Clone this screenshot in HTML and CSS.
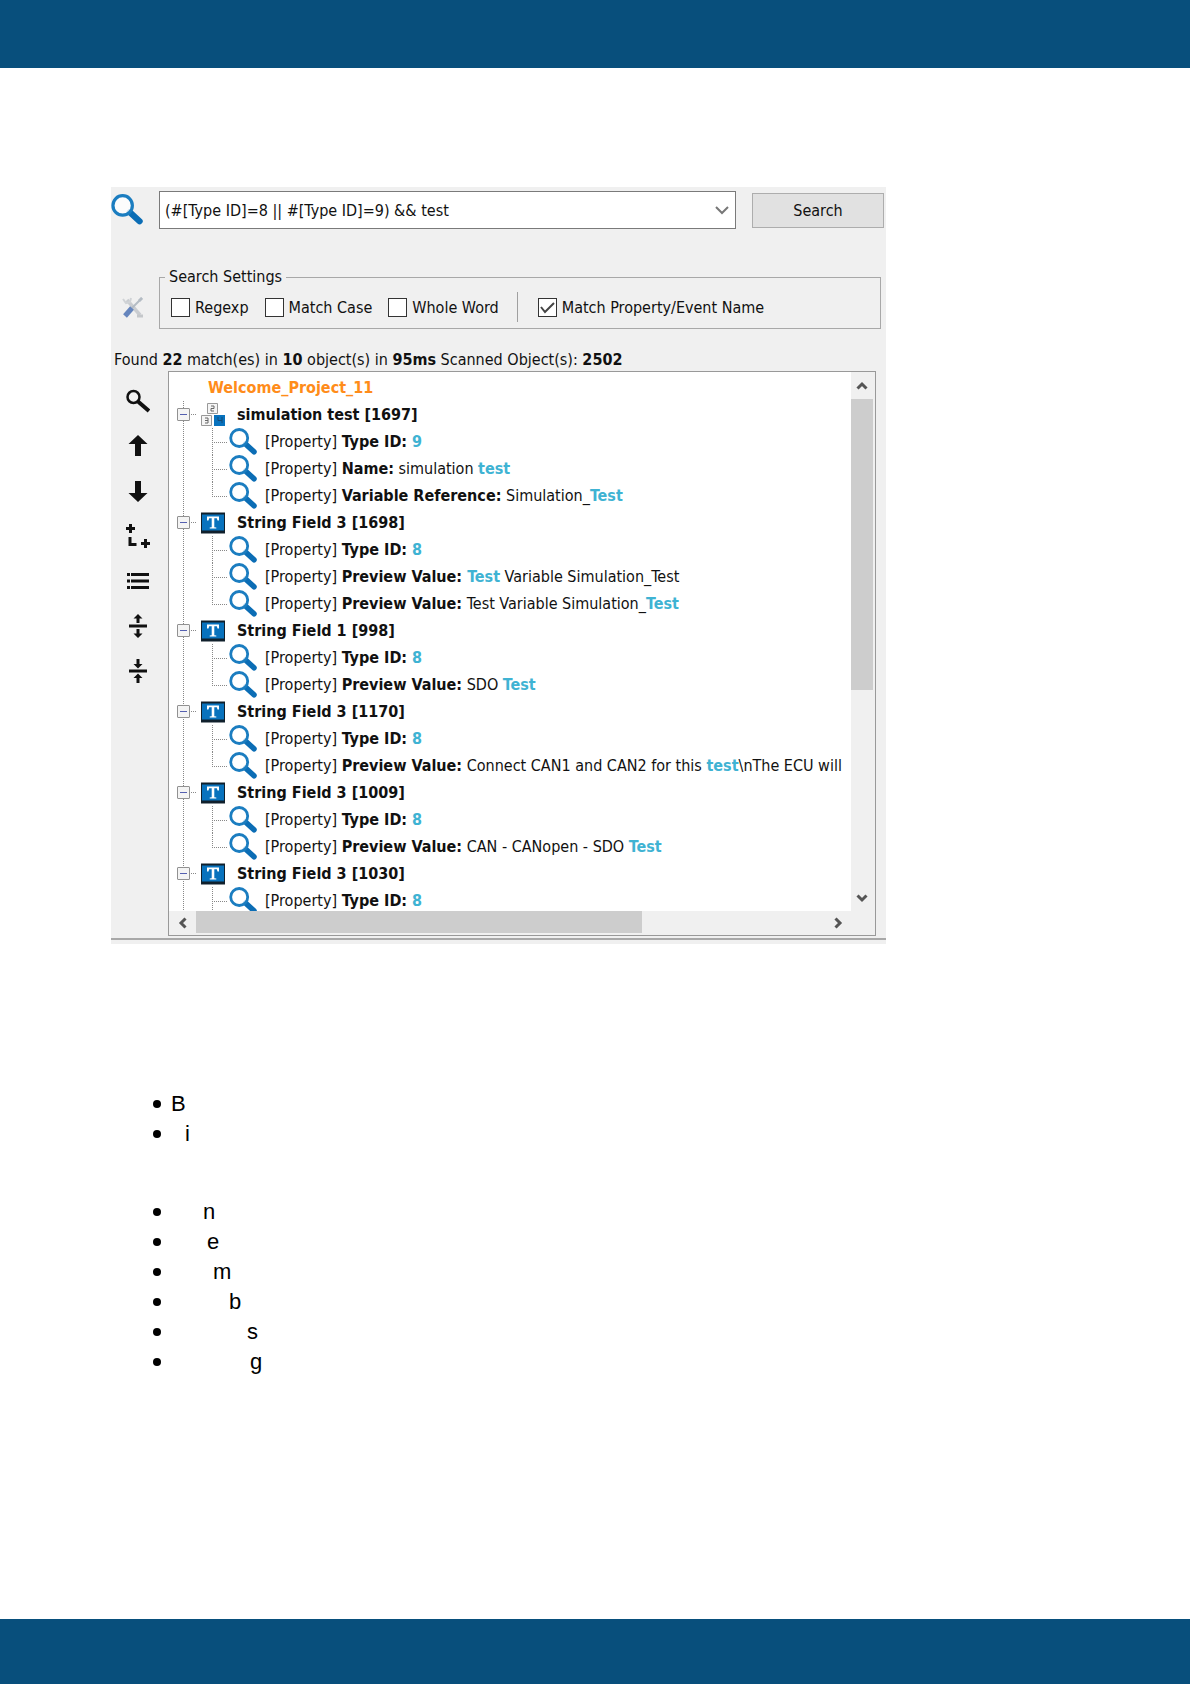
FILE: index.html
```
<!DOCTYPE html>
<html lang="en">
<head>
<meta charset="UTF-8">
<meta name="viewport" content="width=device-width, initial-scale=1.0">
<title>Search</title>
<link rel="stylesheet" href="styles.css">
</head>
<body>

<!-- shared icons -->
<svg class="sprite" aria-hidden="true">
  <symbol id="lens" viewBox="0 0 28 28">
    <path d="M16.500 16L25 23.800" stroke="#0b6db5" stroke-width="5.500" stroke-linecap="round"/>
    <circle cx="10.200" cy="10" r="8.500" fill="#fff" fill-opacity=".8" stroke="#1b7dc0" stroke-width="2.800"/>
  </symbol>
  <symbol id="field" viewBox="0 0 24 21">
    <path d="M0 0h24v21H0z" fill="#10202c"/>
    <path d="M1 2h22v16H1z" fill="#0872bd"/>
    <path d="M6 4h12v4h-1.500l-.7-2.300H13.300v9l2 .4V16H8.700v-.9l2-.4v-9H8.200L7.500 8H6z" fill="#fff"/>
  </symbol>
  <symbol id="chevron" viewBox="0 0 12 12">
    <path d="M1.500 8.500L6 4l4.500 4.500" fill="none" stroke="#555" stroke-width="3"/>
  </symbol>
</svg>

<header class="band band-top"></header>

<main>
  <section class="panel">
    <form class="search">
      <svg class="search-icon"><use href="#lens"/></svg>
      <div class="combo">
        <input type="text" aria-label="Query" value="(#[Type ID]=8 || #[Type ID]=9) &amp;&amp; test">
        <button type="button" aria-label="History">
          <svg width="14" height="10" viewBox="0 0 14 10"><path d="M1 2l6 6 6-6" fill="none" stroke="#777" stroke-width="2"/></svg>
        </button>
      </div>
      <button type="button" class="btn">Search</button>
    </form>

    <div class="settings">
      <svg class="tools" viewBox="0 0 22 22">
        <path d="M5 4l13 15" stroke="#c9ccd0" stroke-width="3.500"/>
        <path d="M1 3l3 4 4-1 1-4" fill="none" stroke="#d0d3d6" stroke-width="2"/>
        <path d="M20 2L10 12" stroke="#b4bcc4" stroke-width="2"/>
        <path d="M19 1l2 2-3 3-2-2z" fill="#b4bcc4"/>
        <path d="M10 12l-7 8" stroke="#6585bd" stroke-width="5"/>
        <path d="M15 20h6" stroke="#c4c7ca" stroke-width="3"/>
      </svg>
      <fieldset>
        <legend>Search Settings</legend>
        <div class="options">
          <label><input type="checkbox">Regexp</label>
          <label><input type="checkbox">Match Case</label>
          <label><input type="checkbox">Whole Word</label>
          <span class="divider"></span>
          <label><input type="checkbox" checked>Match Property/Event Name</label>
        </div>
      </fieldset>
    </div>

    <p class="summary">Found <b>22</b> match(es) in <b>10</b> object(s) in <b>95ms</b> Scanned Object(s): <b>2502</b></p>

    <div class="results">
      <div class="toolbar">
        <button type="button" aria-label="Find"><svg viewBox="0 0 24 24"><circle cx="7.500" cy="8" r="6" fill="none" stroke="#111" stroke-width="2.500"/><path d="M12 12.500l11 9.500" stroke="#111" stroke-width="4"/></svg></button>
        <button type="button" aria-label="Previous"><svg viewBox="0 0 24 24"><path d="M12 1l9.500 9H15v12H9V10H2.500z"/></svg></button>
        <button type="button" aria-label="Next"><svg viewBox="0 0 24 24"><path d="M12 23l9.500-9H15V2H9v12H2.500z"/></svg></button>
        <button type="button" aria-label="Expand branch"><svg viewBox="0 0 24 24"><path d="M0 4.500h9M4.500 0v9M15 19.500h9M19.500 15v9M4 13v7.500h6.500" fill="none" stroke="#111" stroke-width="3"/></svg></button>
        <button type="button" aria-label="List"><svg viewBox="0 0 24 24"><path d="M1 5.500h3M5 5.500h18M1 12h3M5 12h18M1 18.500h3M5 18.500h18" stroke="#111" stroke-width="3"/></svg></button>
        <button type="button" aria-label="Expand all"><svg viewBox="0 0 24 24"><path d="M3 12h18" stroke="#111" stroke-width="3"/><path d="M12 0l4.500 4.500h-3V9h-3V4.500h-3zM12 24l4.500-4.500h-3V15h-3v4.500h-3z"/></svg></button>
        <button type="button" aria-label="Collapse all"><svg viewBox="0 0 24 24"><path d="M3 12h18" stroke="#111" stroke-width="3"/><path d="M12 9.500L16.500 5h-3V0h-3v5h-3zM12 14.500l4.500 4.500h-3v5h-3v-5h-3z"/></svg></button>
      </div>

      <div class="tree-box">
        <div class="tree">
          <div class="project">Welcome_Project_11</div>
          <ul class="nodes">
            <li>
              <div class="node">
                <button type="button" class="toggle" aria-label="Collapse"></button>
                <svg class="node-icon" viewBox="0 0 24 24">
                  <path d="M6.500 .5h10v10h-10zM.5 12.500h10v10H.5z" fill="#f5f5f5" stroke="#999"/>
                  <path d="M13 12h11v11H13z" fill="#0872bd"/>
                  <path d="M10 3h3v2.500h-3V8h3M4 15h3v5H4M4 17.500h3" fill="none" stroke="#666"/>
                  <path d="M17 14v3.500h4M21 14v6" fill="none" stroke="#124b78"/>
                </svg>
                <b>simulation test [1697]</b>
              </div>
              <ul class="props">
                <li><svg><use href="#lens"/></svg><span>[Property] <b>Type ID: <mark>9</mark></b></span></li>
                <li><svg><use href="#lens"/></svg><span>[Property] <b>Name:</b> simulation <mark>test</mark></span></li>
                <li><svg><use href="#lens"/></svg><span>[Property] <b>Variable Reference:</b> Simulation_<mark>Test</mark></span></li>
              </ul>
            </li>
            <li>
              <div class="node">
                <button type="button" class="toggle" aria-label="Collapse"></button>
                <svg class="node-icon"><use href="#field"/></svg>
                <b>String Field 3 [1698]</b>
              </div>
              <ul class="props">
                <li><svg><use href="#lens"/></svg><span>[Property] <b>Type ID: <mark>8</mark></b></span></li>
                <li><svg><use href="#lens"/></svg><span>[Property] <b>Preview Value: <mark>Test</mark></b> Variable Simulation_Test</span></li>
                <li><svg><use href="#lens"/></svg><span>[Property] <b>Preview Value:</b> Test Variable Simulation_<mark>Test</mark></span></li>
              </ul>
            </li>
            <li>
              <div class="node">
                <button type="button" class="toggle" aria-label="Collapse"></button>
                <svg class="node-icon"><use href="#field"/></svg>
                <b>String Field 1 [998]</b>
              </div>
              <ul class="props">
                <li><svg><use href="#lens"/></svg><span>[Property] <b>Type ID: <mark>8</mark></b></span></li>
                <li><svg><use href="#lens"/></svg><span>[Property] <b>Preview Value:</b> SDO <mark>Test</mark></span></li>
              </ul>
            </li>
            <li>
              <div class="node">
                <button type="button" class="toggle" aria-label="Collapse"></button>
                <svg class="node-icon"><use href="#field"/></svg>
                <b>String Field 3 [1170]</b>
              </div>
              <ul class="props">
                <li><svg><use href="#lens"/></svg><span>[Property] <b>Type ID: <mark>8</mark></b></span></li>
                <li><svg><use href="#lens"/></svg><span>[Property] <b>Preview Value:</b> Connect CAN1 and CAN2 for this <mark>test</mark>\nThe ECU will</span></li>
              </ul>
            </li>
            <li>
              <div class="node">
                <button type="button" class="toggle" aria-label="Collapse"></button>
                <svg class="node-icon"><use href="#field"/></svg>
                <b>String Field 3 [1009]</b>
              </div>
              <ul class="props">
                <li><svg><use href="#lens"/></svg><span>[Property] <b>Type ID: <mark>8</mark></b></span></li>
                <li><svg><use href="#lens"/></svg><span>[Property] <b>Preview Value:</b> CAN - CANopen - SDO <mark>Test</mark></span></li>
              </ul>
            </li>
            <li>
              <div class="node">
                <button type="button" class="toggle" aria-label="Collapse"></button>
                <svg class="node-icon"><use href="#field"/></svg>
                <b>String Field 3 [1030]</b>
              </div>
              <ul class="props props-more">
                <li><svg><use href="#lens"/></svg><span>[Property] <b>Type ID: <mark>8</mark></b></span></li>
              </ul>
            </li>
          </ul>
        </div>
        <div class="scroll scroll-y">
          <button type="button" aria-label="Scroll up"><svg><use href="#chevron"/></svg></button>
          <div class="track"><div class="thumb"></div></div>
          <button type="button" class="down" aria-label="Scroll down"><svg><use href="#chevron"/></svg></button>
        </div>
        <div class="scroll scroll-x">
          <button type="button" class="left" aria-label="Scroll left"><svg><use href="#chevron"/></svg></button>
          <div class="track"><div class="thumb"></div></div>
          <button type="button" class="right" aria-label="Scroll right"><svg><use href="#chevron"/></svg></button>
        </div>
      </div>
    </div>
  </section>

  <ul class="letters">
    <li>B</li>
    <li class="in-1">i</li>
  </ul>
  <ul class="letters">
    <li class="in-2">n</li>
    <li class="in-3">e</li>
    <li class="in-4">m</li>
    <li class="in-5">b</li>
    <li class="in-6">s</li>
    <li class="in-7">g</li>
  </ul>
</main>

<footer class="band band-bottom"></footer>

</body>
</html>
```
FILE: styles.css
```
* {
  margin: 0;
  padding: 0;
  box-sizing: border-box;
}

body {
  display: flex;
  flex-direction: column;
  min-height: 100vh;
  background-color: #fff;
  color: #111;
  font-family: "DejaVu Sans Condensed", "DejaVu Sans", sans-serif;
  font-size: 16px;
}

ul {
  list-style: none;
}

button {
  border: none;
  background: none;
  font: inherit;
  color: inherit;
}

svg {
  display: block;
  flex: none;
}

.sprite {
  width: 0;
  height: 0;
  position: absolute;
}

.band {
  background-color: #084f7c;
}

.band-top {
  height: 68px;
}

.band-bottom {
  height: 65px;
}

main {
  flex: 1;
  padding: 119px 304px 0 111px;
}

.panel {
  padding-top: 4px;
  padding-bottom: 4px;
  background-color: #f0f0f0;
}

/* search row */
.search {
  display: flex;
  align-items: center;
  padding-right: 2px;
}

.search-icon {
  width: 32px;
  height: 32px;
  margin-right: 16px;
}

.combo {
  flex: 1;
  display: flex;
  height: 38px;
  margin-right: 16px;
  border: 1px solid #7a7a7a;
  background-color: #fff;
}

.combo input {
  flex: 1;
  min-width: 0;
  padding-left: 5px;
  border: none;
  outline: none;
  background: none;
  font: inherit;
  color: inherit;
}

.combo button {
  padding: 0 6px;
}

.btn {
  width: 132px;
  height: 35px;
  border: 1px solid #adadad;
  background-color: #e1e1e1;
}

/* settings */
.settings {
  display: flex;
  align-items: flex-end;
  margin-top: 38px;
  padding-right: 5px;
}

.tools {
  width: 22px;
  height: 22px;
  margin: 0 15px 11px 11px;
}

fieldset {
  flex: 1;
  min-width: 0;
  border: 1px solid #a8a8a8;
}

legend {
  margin-left: 5px;
  padding: 0 4px;
  line-height: 20px;
}

.options {
  display: flex;
  align-items: center;
  gap: 16px;
  padding: 5px 0 6px 11px;
}

.options label {
  display: flex;
  align-items: center;
  gap: 5px;
  white-space: nowrap;
}

.options input {
  appearance: none;
  width: 19px;
  height: 19px;
  border: 1px solid #333;
  background-color: #fff;
}

.options input:checked {
  background-image: url("data:image/svg+xml,%3Csvg xmlns='http://www.w3.org/2000/svg' viewBox='0 0 17 17'%3E%3Cpath d='M2 8l4 5 9-9' fill='none' stroke='%23444' stroke-width='2'/%3E%3C/svg%3E");
}

.divider {
  width: 1px;
  height: 30px;
  margin: 0 4px 0 2px;
  background-color: #a0a0a0;
}

.summary {
  padding: 21px 0 1px 3px;
  line-height: 20px;
}

/* results */
.results {
  display: flex;
  padding-right: 10px;
  padding-bottom: 2px;
  border-bottom: 2px solid #a8a8a8;
}

.toolbar {
  display: flex;
  flex-direction: column;
  gap: 21px;
  width: 57px;
  padding: 18px 0 0 15px;
}

.toolbar button {
  width: 24px;
  height: 24px;
}

.toolbar svg {
  width: 24px;
  height: 24px;
  fill: #111;
}

.tree-box {
  flex: 1;
  min-width: 0;
  display: grid;
  grid-template-columns: minmax(0, 1fr) 24px;
  grid-template-rows: 539px 24px;
  border: 1px solid #999;
  background-color: #fff;
}

.tree {
  overflow: hidden;
  padding-top: 2px;
  white-space: nowrap;
  line-height: 27px;
}

.project {
  padding-left: 39px;
  color: #ff8c1a;
  font-weight: bold;
}

.nodes {
  margin-left: 14px;
  background: repeating-linear-gradient(#888 0 1px, transparent 1px 2px) 0 0 / 1px 100% no-repeat;
}

.node {
  display: flex;
  align-items: center;
  height: 27px;
  margin-left: -6px;
}

.toggle {
  width: 13px;
  height: 13px;
  border: 1px solid #919191;
  border-radius: 1px;
  background: linear-gradient(#5560b0, #5560b0) center / 7px 1px no-repeat #f4f4f4;
}

.node::before {
  content: "";
  order: 1;
  width: 5px;
  height: 1px;
  margin: 0 5px 0 1px;
  background: repeating-linear-gradient(90deg, #888 0 1px, transparent 1px 2px);
}

.node-icon {
  order: 2;
  width: 24px;
  height: 24px;
  margin-right: 12px;
}

.node b {
  order: 3;
}

.props {
  margin-left: 29px;
}

.props li {
  display: flex;
  height: 27px;
}

.props li::before {
  content: "";
  width: 15px;
  margin-right: 2px;
  background:
    repeating-linear-gradient(#888 0 1px, transparent 1px 2px) 0 0 / 1px 100% no-repeat,
    repeating-linear-gradient(90deg, #888 0 1px, transparent 1px 2px) 0 14px / 15px 1px no-repeat;
}

.props li:last-child::before {
  background-size: 1px 14px, 15px 1px;
}

.props-more li:last-child::before {
  background-size: 1px 100%, 15px 1px;
}

.props svg {
  width: 28px;
  height: 28px;
  margin-right: 8px;
}

mark {
  background: none;
  color: #3fb3d3;
  font-weight: bold;
}

/* scroll bars */
.scroll {
  display: flex;
  background-color: #f0f0f0;
}

.scroll-y {
  flex-direction: column;
}

.scroll-x {
  grid-column: 1 / -1;
  padding-right: 24px;
}

.scroll button {
  flex: none;
  display: grid;
  place-items: center;
  width: 27px;
  height: 24px;
}

.scroll-y button {
  width: 22px;
  height: 27px;
}

.scroll svg {
  width: 12px;
  height: 12px;
}

.track {
  flex: 1;
}

.thumb {
  background-color: #cdcdcd;
}

.scroll-y .thumb {
  width: 22px;
  height: 60%;
}

.scroll-x .thumb {
  width: 71%;
  height: 22px;
}

.down svg {
  transform: rotate(180deg);
}

.left svg {
  transform: rotate(-90deg);
}

.right svg {
  transform: rotate(90deg);
}

/* list under the panel */
.letters {
  margin-top: 48px;
  color: #000;
  font-family: "Liberation Sans", Arial, sans-serif;
  font-size: 22px;
  line-height: 30px;
}

.panel + .letters {
  margin-top: 145px;
}

.letters li {
  display: flex;
  align-items: center;
  padding-left: 42px;
}

.letters li::before {
  content: "";
  width: 8px;
  height: 8px;
  margin-right: 10px;
  border-radius: 50%;
  background-color: #000;
}

.letters .in-1::before { margin-right: 24px; }
.letters .in-2::before { margin-right: 42px; }
.letters .in-3::before { margin-right: 46px; }
.letters .in-4::before { margin-right: 52px; }
.letters .in-5::before { margin-right: 68px; }
.letters .in-6::before { margin-right: 86px; }
.letters .in-7::before { margin-right: 89px; }
```
